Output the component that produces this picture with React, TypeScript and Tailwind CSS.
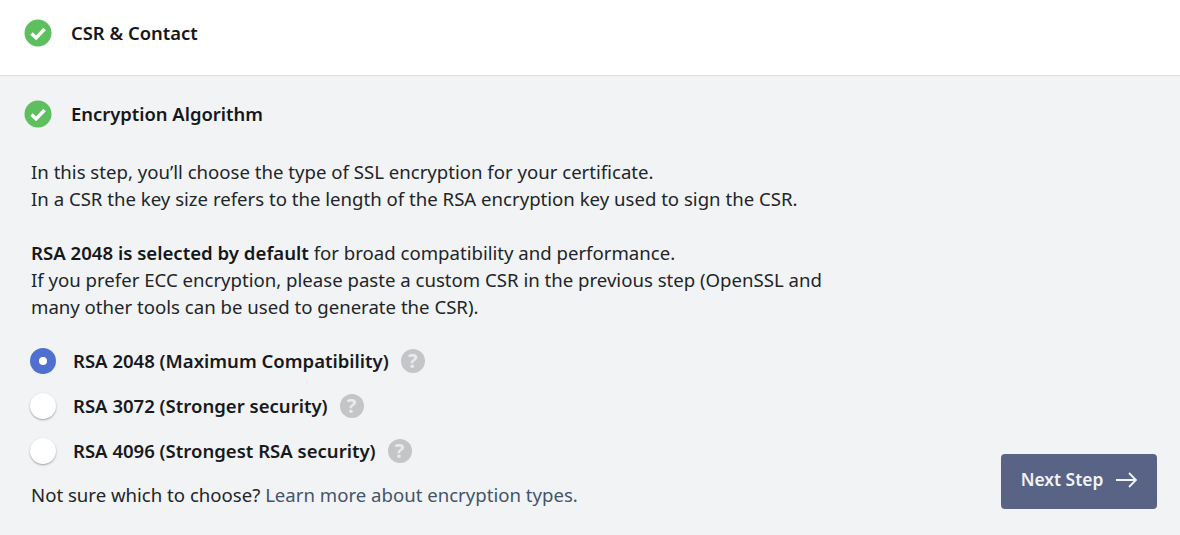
function CheckBadge() {
  return (
    <svg width="28" height="28" viewBox="0 0 28 28" className="shrink-0">
      <circle cx="14" cy="14" r="13.5" fill="#5dbf5d" />
      <path d="M7.5 14.5l4.6 4.4L20.6 10" fill="none" stroke="#fff" strokeWidth="3.4" />
    </svg>
  );
}

function Help() {
  return (
    <span className="flex h-6 w-6 items-center justify-center rounded-full bg-[#c4c5c7] text-xl font-bold text-[#e9eaec]">?</span>
  );
}

function Radio({ label, checked }: { label: string; checked?: boolean }) {
  return (
    <div className="-ml-px flex h-[45px] items-center">
      {checked ? (
        <span className="flex h-[26px] w-[26px] items-center justify-center rounded-full bg-[#4f6fd1]">
          <span className="h-2 w-2 rounded-full bg-white" />
        </span>
      ) : (
        <span className="h-[26px] w-[26px] rounded-full bg-white shadow-[0_1px_2px_rgba(0,0,0,0.35)]" />
      )}
      <span className="ml-[17px] mr-3 text-[18.55px] font-semibold text-[#17191c]">{label}</span>
      <Help />
    </div>
  );
}

export default function App() {
  return (
    <div className="relative h-[535px] w-[1180px] overflow-hidden bg-[#f1f3f5] font-['Noto_Sans',sans-serif] text-[#212529]">
      <div className="flex h-[76px] items-center gap-[19px] border-b border-[#dfe1e4] bg-white pb-2.5 pl-6">
        <CheckBadge />
        <h2 className="text-[18.4px] font-semibold text-[#15171a]">CSR &amp; Contact</h2>
      </div>
      <div className="pl-[31px] pr-[30px]">
        <div className="-ml-[7px] flex h-[76px] items-center gap-[19px]">
          <CheckBadge />
          <h2 className="text-[18.4px] font-semibold text-[#15171a]">Encryption Algorithm</h2>
        </div>
        <div className="mt-1.5 text-[18.6px] leading-[27px]">
          <p>In this step, you’ll choose the type of SSL encryption for your certificate.</p>
          <p>In a CSR the key size refers to the length of the RSA encryption key used to sign the CSR.</p>
          <p className="mt-[27px]"><b className="font-semibold text-[#15171a]">RSA 2048 is selected by default</b> for broad compatibility and performance.</p>
          <p className="w-[810px]">If you prefer ECC encryption, please paste a custom CSR in the previous step (OpenSSL and many other tools can be used to generate the CSR).</p>
        </div>
        <div className="mt-[18px]">
          <Radio label="RSA 2048 (Maximum Compatibility)" checked />
          <Radio label="RSA 3072 (Stronger security)" />
          <Radio label="RSA 4096 (Strongest RSA security)" />
        </div>
        <p className="mt-[8px] text-[18.6px] leading-[27px]">
          Not sure which to choose? <a className="text-[#44546a]">Learn more about encryption types.</a>
        </p>
      </div>
      <button className="absolute bottom-[26px] right-[23px] flex h-[55px] w-[156px] items-center justify-center gap-3 rounded bg-[#596385] pb-1 text-[17.4px] font-semibold text-[#f1f3f5]">
        Next Step
        <svg width="22" height="16" viewBox="0 0 22 16" fill="none" stroke="#f1f3f5" strokeWidth="1.8">
          <path d="M1 8h20M14 1l7 7-7 7" />
        </svg>
      </button>
    </div>
  );
}
